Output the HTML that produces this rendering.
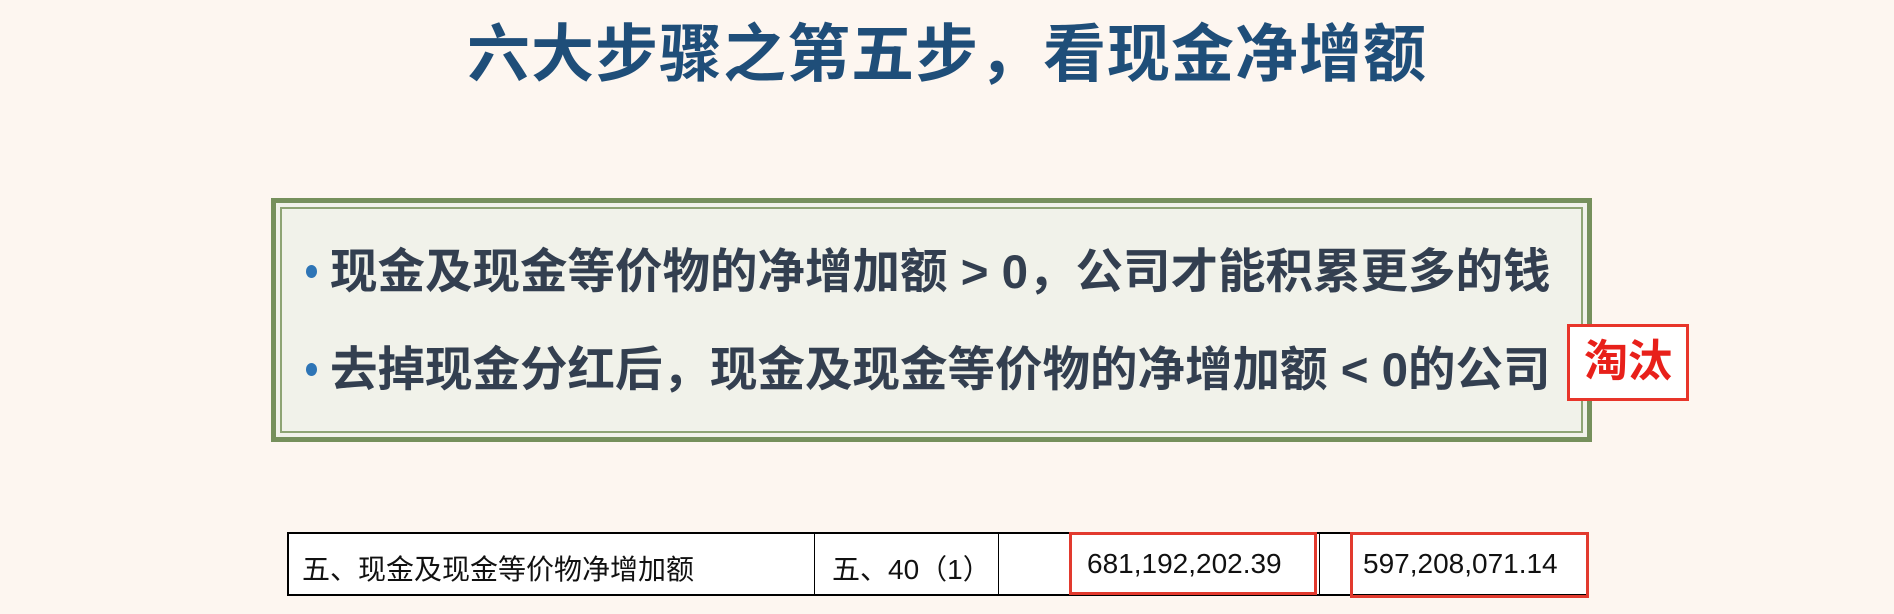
<!DOCTYPE html>
<html><head><meta charset="utf-8"><style>
body{margin:0;width:1894px;height:614px;background:#fdf6f0;position:relative;overflow:hidden;font-family:"Liberation Sans","Noto Sans CJK SC",sans-serif}
.t{position:absolute;left:0;width:1894px;top:4px;text-align:center;font-size:63px;font-weight:bold;color:#1f4e79;letter-spacing:1px}
.box{position:absolute;left:271px;top:198px;width:1321px;height:244px;box-sizing:border-box;border:5px solid #76905c;background:#f1f2ea}
.box:after{content:"";position:absolute;left:4px;top:4px;right:4px;bottom:4px;border:2px solid #8ea474}
.l{position:absolute;left:30px;font-size:47.5px;font-weight:bold;color:#333f50;white-space:nowrap}
.l i{display:inline-block;width:11px;height:13px;border-radius:50%;background:#2e75b6;vertical-align:middle;margin-right:13px;position:relative;top:-4px}
.tt{position:absolute;left:1567px;top:324px;width:122px;height:77px;box-sizing:border-box;border:3px solid #e8352a;background:#fff;color:#e8201a;font-size:44px;font-weight:bold;text-align:center;line-height:70px}
.tb{position:absolute;left:287px;top:532px;width:1302px;height:64px;box-sizing:border-box;border:2px solid #000;background:#fff}
.v{position:absolute;top:0;bottom:0;border-left:1px solid #000}
.c{position:absolute;top:14px;font-size:28px;color:#111;white-space:nowrap}
.r{position:absolute;border:3px solid #e23a2e;box-sizing:border-box}
</style></head><body>
<div class="t">六大步骤之第五步，看现金净增额</div>
<div class="box">
<div class="l" style="top:30px"><i></i>现金及现金等价物的净增加额 &gt; 0，公司才能积累更多的钱</div>
<div class="l" style="top:128px"><i></i>去掉现金分红后，现金及现金等价物的净增加额 &lt; 0的公司</div>
</div>
<div class="tt">淘汰</div>
<div class="tb">
<div class="v" style="left:525px"></div>
<div class="v" style="left:709px"></div>
<div class="v" style="left:1030px"></div>
<div class="c" style="left:13px">五、现金及现金等价物净增加额</div>
<div class="c" style="left:543px">五、40（1）</div>
<div class="c" style="left:798px">681,192,202.39</div>
<div class="c" style="left:1074px">597,208,071.14</div>
</div>
<div class="r" style="left:1069px;top:532px;width:248px;height:63px"></div>
<div class="r" style="left:1350px;top:532px;width:239px;height:66px"></div>
</body></html>
